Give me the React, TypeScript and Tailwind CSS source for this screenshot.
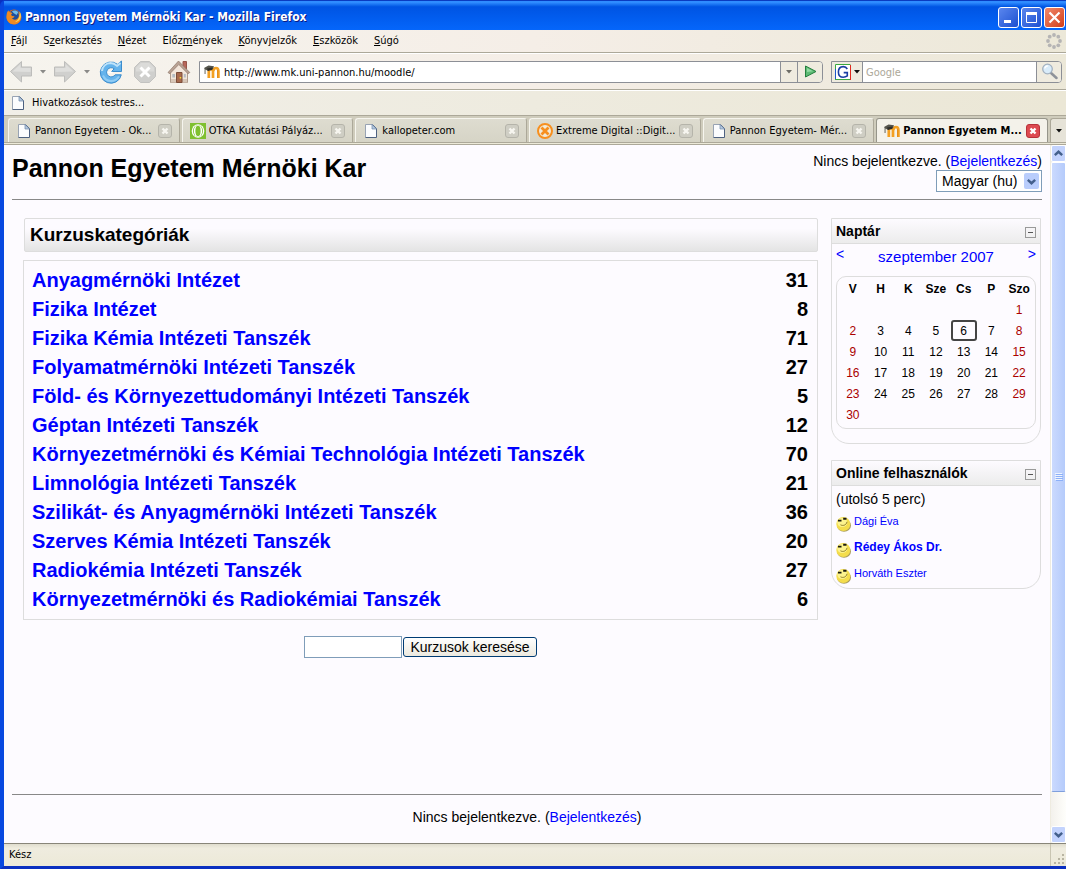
import React from 'react';

const categories: [string, number][] = [
  ['Anyagmérnöki Intézet', 31],
  ['Fizika Intézet', 8],
  ['Fizika Kémia Intézeti Tanszék', 71],
  ['Folyamatmérnöki Intézeti Tanszék', 27],
  ['Föld- és Környezettudományi Intézeti Tanszék', 5],
  ['Géptan Intézeti Tanszék', 12],
  ['Környezetmérnöki és Kémiai Technológia Intézeti Tanszék', 70],
  ['Limnológia Intézeti Tanszék', 21],
  ['Szilikát- és Anyagmérnöki Intézeti Tanszék', 36],
  ['Szerves Kémia Intézeti Tanszék', 20],
  ['Radiokémia Intézeti Tanszék', 27],
  ['Környezetmérnöki és Radiokémiai Tanszék', 6],
];

const weeks: (number | null)[][] = [
  [null, null, null, null, null, null, 1],
  [2, 3, 4, 5, 6, 7, 8],
  [9, 10, 11, 12, 13, 14, 15],
  [16, 17, 18, 19, 20, 21, 22],
  [23, 24, 25, 26, 27, 28, 29],
  [30, null, null, null, null, null, null],
];

const menus = [
  ['', 'F', 'ájl'],
  ['S', 'z', 'erkesztés'],
  ['', 'N', 'ézet'],
  ['Előz', 'm', 'ények'],
  ['', 'K', 'önyvjelzők'],
  ['', 'E', 'szközök'],
  ['', 'S', 'úgó'],
];

function FirefoxIcon() {
  return (
    <svg width="16" height="16" viewBox="0 0 16 16" aria-hidden="true">
      <circle cx="8" cy="8" r="7.5" fill="#d9661a" />
      <circle cx="8.5" cy="6.4" r="5.4" fill="#1f4f9c" />
      <path d="M6 2.2c2-1.300 5-.6 6.300 1L10.500 6 7.500 4z" fill="#6fbbe8" />
      <path d="M.6 6C.8 3.500 1.600 2 2.600 1.200c0 1 .3 1.500 1 2 1 .1 2 .3 2.700 1L5 5.800l1 1.200 2.500.3C8 8.800 7 9.300 6 9c1.300 2.600 6 2.200 6.800-1.700.3-1.500-.1-2.800-.8-4 2 1.300 3.500 3.700 3 6.200-1 4-4 6-7.500 5.800C3.500 15.200.5 12 .5 8z" fill="#ee8a22" />
      <path d="M13.500 2.500c1.300 1.500 1.700 3.800 1.200 5.700-.8 3-3 4.800-5.800 5 3.500-2 5.400-5.600 4.600-10.700z" fill="#fbd95a" />
    </svg>
  );
}

function PageIcon() {
  return (
    <svg width="16" height="16" viewBox="0 0 16 16" className="shrink-0" aria-hidden="true">
      <path d="M2.500 1.500h7l4 4v9h-11z" fill="#fbfcfe" />
      <path d="M2.500 14.500v-13h7" fill="none" stroke="#98a3b3" />
      <path d="M9.500 1.500l4 4v9h-11" fill="none" stroke="#4d6180" />
      <path d="M9 1.500v4.500h4.500z" fill="#b5c9e0" stroke="#6f86a6" strokeWidth=".7" />
    </svg>
  );
}

function MoodleIcon() {
  return (
    <svg width="16" height="16" viewBox="0 0 16 16" className="shrink-0" aria-hidden="true">
      <path d="M4.800 14V7.500q0-2.300 1.800-2.300t2.400 1.600V14M9.300 7q.4-3 2.700-3t2.400 3v7" fill="none" stroke="#f3a022" strokeWidth="2.700" />
      <path d="M13.600 6v8" stroke="#dd8412" strokeWidth=".7" />
      <path d="M0 4 4.500 1.500 10 2.300 9 5 5.500 4.700 4 7 1.500 5.500V10H.6V5z" fill="#55554d" />
      <path d="M3 4.500 8.500 3.500v2.200L4 7z" fill="#2e2e2a" />
    </svg>
  );
}

function BackIcon() {
  return (
    <svg width="24" height="24" viewBox="0 0 24 24" aria-hidden="true">
      <path d="M1.500 11.500 12.500 1.500v5.500H22.500v9H12.500v6z" fill="#d0d0ce" stroke="#bdbdbb" strokeLinejoin="round" />
      <path d="M3.500 11.500 11.500 4.200v3.800H21.500V12z" fill="#dfdfdd" />
    </svg>
  );
}

function Chevron({ up = false }: { up?: boolean }) {
  return (
    <svg width="9" height="7" viewBox="0 0 9 7" aria-hidden="true">
      <path d={up ? 'M.8 5.200 4.500 1.800 8.200 5.200' : 'M.8 1.800 4.500 5.200 8.200 1.800'} fill="none" stroke="#44608c" strokeWidth="2.500" />
    </svg>
  );
}

function Triangle({ color }: { color: string }) {
  return (
    <svg width="6" height="4" viewBox="0 0 6 4" aria-hidden="true">
      <path d="M0 0h6L3 3.500z" fill={color} />
    </svg>
  );
}

function ReloadIcon() {
  return (
    <svg width="24" height="24" viewBox="0 0 24 24" aria-hidden="true">
      <path d="M18.500 4.300 22.500 1V11.500H12.500l2.700-2.700a4.600 4.600 0 1 0 .9 6h6.200A10.600 10.600 0 1 1 18.500 4.300z" fill="#64b3ec" stroke="#3b8ccd" strokeLinejoin="round" />
      <path d="M3 11C3.500 6.500 7 3.300 11.500 3.100c2.500 0 4.500.8 6.500 2.800l3.500-3" fill="none" stroke="#bfe3fa" strokeWidth="2" />
      <path d="M4 15.500c1.500 3.500 4.500 5.500 8 5.500s6-1.500 8-4.500" fill="none" stroke="#8fcbf4" strokeWidth="2" />
      <path d="M8.500 12.500h5" stroke="#fff" strokeWidth="1.500" />
    </svg>
  );
}

function StopIcon() {
  return (
    <svg width="24" height="24" viewBox="0 0 24 24" aria-hidden="true">
      <path d="M7.500 1.500h9l6 6v9l-6 6h-9l-6-6v-9z" fill="#cfcfcd" stroke="#c2c2c0" strokeLinejoin="round" />
      <path d="M7.800 3h8.400L21 7.800v3.700H3V7.800z" fill="#dbdbd9" />
      <path d="m7.500 7.500 9 9m0-9-9 9" stroke="#fff" strokeWidth="3" />
    </svg>
  );
}

function HomeIcon() {
  return (
    <svg width="24" height="24" viewBox="0 0 24 24" aria-hidden="true">
      <path d="M16 1.500h3.500V9H16z" fill="#b8675b" stroke="#96564a" />
      <path d="M3.500 11.500 12 3l8.500 8.500V22.500h-17z" fill="#f3e6db" stroke="#b09c8d" />
      <path d="M1 12.500 11.500 1 22.800 12.500l-1.800 1.200L11.800 4.500 2.800 13.700z" fill="#b9a294" stroke="#8f796b" strokeWidth=".7" />
      <path d="M4 19h16v3.500H4z" fill="#d8c7b8" />
      <path d="M9.500 12.500h5.500v10H9.500z" fill="#a86a4e" stroke="#7c4d39" />
      <path d="M5.300 14h2.700v3.500H5.300zM16.800 14h2v3.500h-2z" fill="#b5bcc2" />
      <path d="M12.700 17h1.500v1.500h-1.500z" fill="#f4dc2e" />
    </svg>
  );
}

function GoIcon() {
  return (
    <svg width="13" height="13" viewBox="0 0 13 13" aria-hidden="true">
      <path d="M1.500 1 12 6.500 1.500 12z" fill="#5cba73" stroke="#247e3d" strokeLinejoin="round" />
      <path d="M3 3v4l6-.8z" fill="#93dba2" />
    </svg>
  );
}

function GoogleIcon() {
  return (
    <svg width="16" height="16" viewBox="0 0 16 16" aria-hidden="true">
      <path d="M0 0h16v16H0z" fill="#fff" />
      <path d="M.5 5V.5H15.500" fill="none" stroke="#3aa83e" />
      <path d="M15.500 1v15" stroke="#e02a20" />
      <path d="M.5 5v10.500" stroke="#1c57c8" />
      <path d="M0 15.500h15" stroke="#3aa83e" />
      <path d="M12.300 5C11.300 3.200 9.800 2.600 8.300 2.600c-3 0-4.900 2.200-4.900 5.300s1.900 5.300 4.900 5.300c1.500 0 3-.5 4-1.300V8.600H8.700" fill="none" stroke="#1b3fa3" strokeWidth="1.600" />
    </svg>
  );
}

function SearchIcon() {
  return (
    <svg width="17" height="17" viewBox="0 0 17 17" aria-hidden="true">
      <path d="m10 10 5.500 5" stroke="#8e9299" strokeWidth="2.500" strokeLinecap="round" />
      <circle cx="6.500" cy="6" r="4.800" fill="#d9ecfa" stroke="#a3b1c0" strokeWidth="1.300" />
      <path d="M3.800 5.500a3 3 0 0 1 3-2.500" stroke="#fff" strokeWidth="1.300" fill="none" />
    </svg>
  );
}

function OtkaIcon() {
  return (
    <svg width="16" height="16" viewBox="0 0 16 16" className="shrink-0" aria-hidden="true">
      <path d="M0 0h16v16H0z" fill="#7fc02f" />
      <ellipse cx="8" cy="8" rx="6.300" ry="6.800" fill="#fff" />
      <ellipse cx="8" cy="8" rx="5" ry="6" fill="#7fc02f" />
      <ellipse cx="8" cy="8" rx="4.200" ry="6" fill="#fff" />
      <ellipse cx="8" cy="8" rx="2.600" ry="5.200" fill="#7fc02f" />
    </svg>
  );
}

function ExtremeIcon() {
  return (
    <svg width="16" height="16" viewBox="0 0 16 16" className="shrink-0" aria-hidden="true">
      <circle cx="8" cy="8" r="7" fill="#f2ead8" stroke="#f78f1e" strokeWidth="2" />
      <path d="m4.500 4.500 7 7m0-7-7 7" stroke="#f78f1e" strokeWidth="2.800" />
    </svg>
  );
}

function CloseTabIcon({ active }: { active?: boolean }) {
  return (
    <svg width="14" height="14" viewBox="0 0 14 14" aria-hidden="true">
      <rect x=".5" y=".5" width="13" height="13" rx="2.500" fill={active ? '#dd4a50' : '#cfcec4'} stroke={active ? '#b8323a' : '#b5b4aa'} />
      <path d="m4.500 4.500 5 5m0-5-5 5" stroke={active ? '#fff' : '#f7f6f0'} strokeWidth="2.400" />
    </svg>
  );
}

function Smiley() {
  return (
    <svg width="15" height="16" viewBox="0 0 15 16" className="shrink-0" aria-hidden="true">
      <ellipse cx="8" cy="9.500" rx="7" ry="6.200" fill="#a99c5c" />
      <circle cx="7.300" cy="8" r="7" fill="#f4dd4c" />
      <ellipse cx="6.300" cy="6.500" rx="5" ry="4.500" fill="#fcf38e" />
      <path d="M2 3.800h3.500v1.700H2zM7.200 1.800h3.300v2H7.200z" fill="#1a1a10" />
      <path d="M4.500 8.800c2.500 1.500 6 .2 6.500-3" fill="none" stroke="#8d7a26" />
    </svg>
  );
}

function Throbber() {
  return (
    <svg width="16" height="16" viewBox="0 0 16 16" aria-hidden="true" fill="#b5b4b4">
      <circle cx="8" cy="2" r="1.900" />
      <circle cx="12.300" cy="3.700" r="1.900" />
      <circle cx="14" cy="8" r="1.900" />
      <circle cx="12.300" cy="12.300" r="1.900" />
      <circle cx="8" cy="14" r="1.900" />
      <circle cx="3.700" cy="12.300" r="1.900" />
      <circle cx="2" cy="8" r="1.900" />
      <circle cx="3.700" cy="3.700" r="1.900" />
    </svg>
  );
}

const tabs = [
  { title: 'Pannon Egyetem - Ok...', icon: <PageIcon /> },
  { title: 'OTKA Kutatási Pályáz...', icon: <OtkaIcon /> },
  { title: 'kallopeter.com', icon: <PageIcon /> },
  { title: 'Extreme Digital ::Digit...', icon: <ExtremeIcon /> },
  { title: 'Pannon Egyetem- Mér...', icon: <PageIcon /> },
  { title: 'Pannon Egyetem M...', icon: <MoodleIcon />, active: true },
];

function TitleBar() {
  return (
    <header className="flex h-[30px] items-center gap-[3px] border-t border-[#0a3bc0] bg-linear-to-b from-[#2f8cff] from-5% via-[#0054e3] via-20% to-[#0566fb] pr-px pl-[2px] pt-[3px] text-white">
      <FirefoxIcon />
      <span className="flex-1 text-[12px] font-bold [text-shadow:1px_1px_0_#0a1883]">
        Pannon Egyetem Mérnöki Kar - Mozilla Firefox
      </span>
      <div className="flex gap-[2px]">
        <button aria-label="Kis méret" className="grid size-[21px] place-items-center rounded-[3px] border border-white bg-linear-to-br from-[#5a86ee] to-[#1c4fd0]">
          <svg width="15" height="15" viewBox="0 0 15 15" aria-hidden="true"><path d="M3 10h7v3H3z" fill="#fff" /></svg>
        </button>
        <button aria-label="Teljes méret" className="grid size-[21px] place-items-center rounded-[3px] border border-white bg-linear-to-br from-[#5a86ee] to-[#1c4fd0]">
          <svg width="15" height="15" viewBox="0 0 15 15" aria-hidden="true"><path d="M2.500 3.500h10v9h-10z" fill="none" stroke="#fff" /><path d="M2 2h11v3H2z" fill="#fff" /></svg>
        </button>
        <button aria-label="Bezárás" className="grid size-[21px] place-items-center rounded-[3px] border border-white bg-linear-to-br from-[#f0886a] to-[#d23c12]">
          <svg width="15" height="15" viewBox="0 0 15 15" aria-hidden="true"><path d="m2.500 2.500 10 10m0-10-10 10" stroke="#fff" strokeWidth="2.200" /></svg>
        </button>
      </div>
    </header>
  );
}

function Toolbars() {
  return (
    <div className="bg-linear-to-r from-[#f6f4ee] via-[#f5eee7] to-[#ece8d8]">
      <nav className="flex h-[23px] items-center border-b border-[#aca899] pl-[7px] pr-[4px]">
        <div className="flex flex-1 gap-4">
          {menus.map(([a, b, c]) => (
            <button key={a + b + c}>{a}<span className="underline">{b}</span>{c}</button>
          ))}
        </div>
        <Throbber />
      </nav>
      <div className="flex h-[37px] items-center border-t border-b border-t-white border-b-[#aca899] pl-[5px] pr-[4px]">
        <button aria-label="Vissza"><BackIcon /></button>
        <button aria-label="Előző oldalak" className="px-[7px]"><Triangle color="#8a8a88" /></button>
        <button aria-label="Előre" className="-scale-x-100"><BackIcon /></button>
        <button aria-label="Következő oldalak" className="px-[7px]"><Triangle color="#8a8a88" /></button>
        <button aria-label="Frissítés" className="ml-[2px]"><ReloadIcon /></button>
        <button aria-label="Leállítás" className="ml-[10px]"><StopIcon /></button>
        <button aria-label="Kezdőlap" className="ml-[10px]"><HomeIcon /></button>
        <div className="ml-2 flex h-[22px] min-w-0 flex-1 items-center rounded-r-[4px] border border-[#8c8f96] bg-white pl-1">
          <MoodleIcon />
          <input aria-label="Cím" defaultValue="http://www.mk.uni-pannon.hu/moodle/" className="ml-1 h-full min-w-0 flex-1 pt-px outline-none" />
          <button aria-label="Címek listája" className="grid h-full w-[17px] place-items-center border-l border-[#8c8f96] bg-[#efebdf]"><Triangle color="#6d6c66" /></button>
          <button aria-label="Ugrás" className="grid h-full w-[25px] place-items-center rounded-r-[3px] border-l border-[#8c8f96] bg-[#efebdf]"><GoIcon /></button>
        </div>
        <div className="ml-2 flex h-[22px] w-[231px] items-center rounded-r-[4px] border border-[#8c8f96] bg-white">
          <button aria-label="Keresőszolgáltatás" className="flex h-full w-[30px] items-center gap-[3px] bg-[#efebdf] pl-[3px]"><GoogleIcon /><Triangle color="#111" /></button>
          <input aria-label="Keresés" placeholder="Google" className="h-full min-w-0 flex-1 border-l border-[#8c8f96] pt-px pl-[3px] outline-none placeholder:text-[#aca899]" />
          <button aria-label="Keresés indítása" className="grid h-full w-[25px] place-items-center rounded-r-[3px] border-l border-[#8c8f96] bg-[#efebdf]"><SearchIcon /></button>
        </div>
      </div>
      <div className="flex h-[25px] items-center border-t border-white bg-linear-to-r from-[#f1efe8] to-[#ebe7d6] pl-[6px]">
        <button className="flex items-center gap-[6px]"><PageIcon /><span className="pt-px">Hivatkozások testres...</span></button>
      </div>
    </div>
  );
}

function TabStrip() {
  return (
    <div className="border-t border-[#aca899] bg-[#cfccbc]">
      <div role="tablist" className="flex h-[26px] items-stretch gap-[2px] pl-1 pt-[2px]">
        {tabs.map((t) => (
          <div
            key={t.title}
            className={
              'flex min-w-0 flex-1 items-center rounded-t-[3px] border border-b-0 pr-[7px] pl-[7px] ' +
              (t.active ? 'border-[#96958a] bg-[#f4f2ea]' : 'border-[#f6f5ee] border-r-[#aca899] bg-linear-to-b from-[#dedcd0] to-[#d6d4c6]')
            }
          >
            <button role="tab" aria-selected={!!t.active} className={'flex min-w-0 flex-1 items-center gap-[3px] whitespace-nowrap ' + (t.active ? 'font-bold' : '')}>
              {t.icon}
              <span className="pt-px">{t.title}</span>
            </button>
            <button aria-label="Lap bezárása"><CloseTabIcon active={t.active} /></button>
          </div>
        ))}
        <button aria-label="Lapok listája" className="grid w-[16px] place-items-center rounded-tl-[3px] border border-b-0 border-r-0 border-[#aca899] bg-[#e6e3d8]"><Triangle color="#111" /></button>
      </div>
      <div className="h-[3px] border-y border-[#aca899] bg-[#ece9d8]" />
    </div>
  );
}

function Block({ title, children }: { title: string; children: React.ReactNode }) {
  return (
    <section className="rounded-b-[18px] border border-[#dddddd]">
      <div className="flex h-[25px] items-center border-b border-[#dddddd] bg-linear-to-b from-[#fdfbff] to-[#ececec] pr-1 pl-1">
        <h2 className="flex-1 text-[14px] font-bold">{title}</h2>
        <button aria-label="Blokk elrejtése" className="mt-[2px] grid size-[11px] place-items-center border border-[#999]"><span className="h-px w-[5px] bg-[#555]" /></button>
      </div>
      {children}
    </section>
  );
}

function Calendar() {
  return (
    <Block title="Naptár">
      <div className="px-1 pb-[14px]">
        <div className="flex h-[32px] justify-between text-[#0000ff]">
          <a href="#elozo" className="text-[14px]">&lt;</a>
          <a href="#honap" className="pt-[2px] text-[15px]">szeptember 2007</a>
          <a href="#kovetkezo" className="text-[14px]">&gt;</a>
        </div>
        <div className="rounded-[10px] border border-[#dddddd] px-[2px] pt-[2px] pb-[3px]">
          <table className="w-full table-fixed text-center text-[12px]">
            <thead>
              <tr className="h-[20px]">
                {['V', 'H', 'K', 'Sze', 'Cs', 'P', 'Szo'].map((d) => <th key={d} className="p-0">{d}</th>)}
              </tr>
            </thead>
            <tbody>
              {weeks.map((w, i) => (
                <tr key={i} className="h-[21px]">
                  {w.map((d, j) => (
                    <td key={j} className={j === 0 || j === 6 ? 'p-0 text-[#aa0000]' : 'p-0'}>
                      {d === 6 ? <span className="mx-auto block h-[21px] w-[26px] rounded-[3px] border-2 border-[#444] leading-[18px]">6</span> : d}
                    </td>
                  ))}
                </tr>
              ))}
            </tbody>
          </table>
        </div>
      </div>
    </Block>
  );
}

function OnlineUsers() {
  return (
    <Block title="Online felhasználók">
      <div className="px-1 pt-[4px] pb-[2px]">
        <p className="text-[14px] leading-[18px]">(utolsó 5 perc)</p>
        <ul className="text-[11px] text-[#0000ff]">
          {['Dági Éva', 'Rédey Ákos Dr.', 'Horváth Eszter'].map((n, i) => (
            <li key={n} className="flex h-[26px] gap-[3px] pt-[5px]">
              <span className="pt-[3px]"><Smiley /></span>
              <a href="#profil" className={i === 1 ? 'text-[12px] leading-[16px] font-bold' : 'leading-[16px]'}>{n}</a>
            </li>
          ))}
        </ul>
      </div>
    </Block>
  );
}

function Page() {
  return (
    <main className="flex min-w-0 flex-1 flex-col bg-[#fdfbff] px-2 text-black [font-family:'Liberation_Sans',Arial,sans-serif]">
      <div className="flex h-[55px] justify-between border-b border-[#888]">
        <h1 className="pt-[7px] text-[25px] leading-[32px] font-bold">Pannon Egyetem Mérnöki Kar</h1>
        <div className="flex flex-col items-end pt-[7px] text-[14px] leading-[18px]">
          <p>Nincs bejelentkezve. (<a href="#bejelentkezes" className="text-[#0000ff]">Bejelentkezés</a>)</p>
          <div className="relative h-[22px] w-[106px] shrink-0">
            <select aria-label="Nyelv" className="h-full w-full appearance-none border border-[#7f9db9] bg-white pl-[5px] text-[14px] outline-none">
              <option>Magyar (hu)</option>
            </select>
            <span className="pointer-events-none absolute top-[3px] right-[3px] grid h-[16px] w-[15px] place-items-center rounded-[2px] bg-[#b9cdfc]"><Chevron /></span>
          </div>
        </div>
      </div>
      <div className="flex gap-[13px] pt-[18px] pr-[1px] pl-[11px]">
        <div className="min-w-0 flex-1">
          <h2 className="ml-px flex h-[34px] items-center rounded-[2px] border border-[#dddddd] bg-linear-to-b from-[#fdfbff] from-30% to-[#e4e4e4] pl-[5px] text-[19px] font-bold">Kurzuskategóriák</h2>
          <div className="mt-2 border border-[#dddddd] px-2 py-[5px] text-[20px] leading-[29px] font-bold">
            <table className="w-full">
              <tbody>
                {categories.map(([name, count]) => (
                  <tr key={name}>
                    <td className="p-0"><a href="#kategoria" className="text-[#0000ff]">{name}</a></td>
                    <td className="p-0 pr-[1px] text-right">{count}</td>
                  </tr>
                ))}
              </tbody>
            </table>
          </div>
          <form className="mt-4 flex items-center justify-center gap-px" onSubmit={(e) => e.preventDefault()}>
            <input aria-label="Kurzusok keresése" className="h-[22px] w-[98px] border border-[#7f9db9] bg-white px-1 text-[14px] outline-none" />
            <button className="h-[20px] w-[134px] rounded-[3px] border border-[#003c74] bg-linear-to-b from-white to-[#ece9df] text-[14px] leading-[16px] whitespace-nowrap">Kurzusok keresése</button>
          </form>
        </div>
        <aside className="flex w-[210px] shrink-0 flex-col gap-4">
          <Calendar />
          <OnlineUsers />
        </aside>
      </div>
      <footer className="mt-auto h-[49px] border-t border-[#888] pt-[13px] text-center text-[14px] leading-[18px]">
        Nincs bejelentkezve. (<a href="#bejelentkezes" className="text-[#0000ff]">Bejelentkezés</a>)
      </footer>
    </main>
  );
}

function Scrollbar() {
  return (
    <div className="flex w-[16px] shrink-0 flex-col border-l border-[#eeebe0] bg-linear-to-r from-[#f3f1ec] to-[#fefefb]">
      <button aria-label="Fel" className="grid h-[17px] place-items-center rounded-[2px] border border-white bg-[#c3d3fd]"><Chevron up /></button>
      <div className="grid flex-1 place-items-center rounded-[2px] border border-white border-b-[#7f9fdc] bg-linear-to-r from-[#cbdafe] to-[#b5cbfb]">
        <svg width="8" height="8" viewBox="0 0 8 8" aria-hidden="true">
          <path d="M0 .5h7M0 2.500h7M0 4.500h7M0 6.500h7" stroke="#eef4fe" />
          <path d="M1 1.500h7M1 3.500h7M1 5.500h7M1 7.500h7" stroke="#8cb0f8" />
        </svg>
      </div>
      <div className="h-[34px]" />
      <button aria-label="Le" className="grid h-[17px] place-items-center rounded-[2px] border border-white bg-[#c3d3fd]"><Chevron /></button>
    </div>
  );
}

export default function App() {
  return (
    <div className="flex min-h-screen flex-col bg-[#0a2fc0] text-[11px] text-black [font-family:'DejaVu_Sans_Condensed','DejaVu_Sans',sans-serif]">
      <div className="flex flex-1 flex-col rounded-tl-[6px] border-b-[3px] border-l-4 border-[#0848e0] border-b-[#0a2fc0] bg-[#0054e3]">
        <TitleBar />
        <Toolbars />
        <TabStrip />
        <div className="flex flex-1 bg-[#fdfbff]">
          <Page />
          <Scrollbar />
        </div>
        <footer className="flex h-[23px] items-center border-t border-[#888579] bg-linear-to-b from-[#e0ddce] via-[#efecdf] via-20% to-[#ece9d8] pl-[5px]">
          <span className="flex-1">Kész</span>
          <span className="flex h-full w-[16px] items-end justify-end border-l border-[#c9c5b2]">
            <svg width="12" height="12" viewBox="0 0 12 12" aria-hidden="true" fill="#b8b4a2">
              <path d="M8 0h2v2H8zM4 4h2v2H4zM8 4h2v2H8zM0 8h2v2H0zM4 8h2v2H4zM8 8h2v2H8z" />
            </svg>
          </span>
        </footer>
      </div>
    </div>
  );
}
